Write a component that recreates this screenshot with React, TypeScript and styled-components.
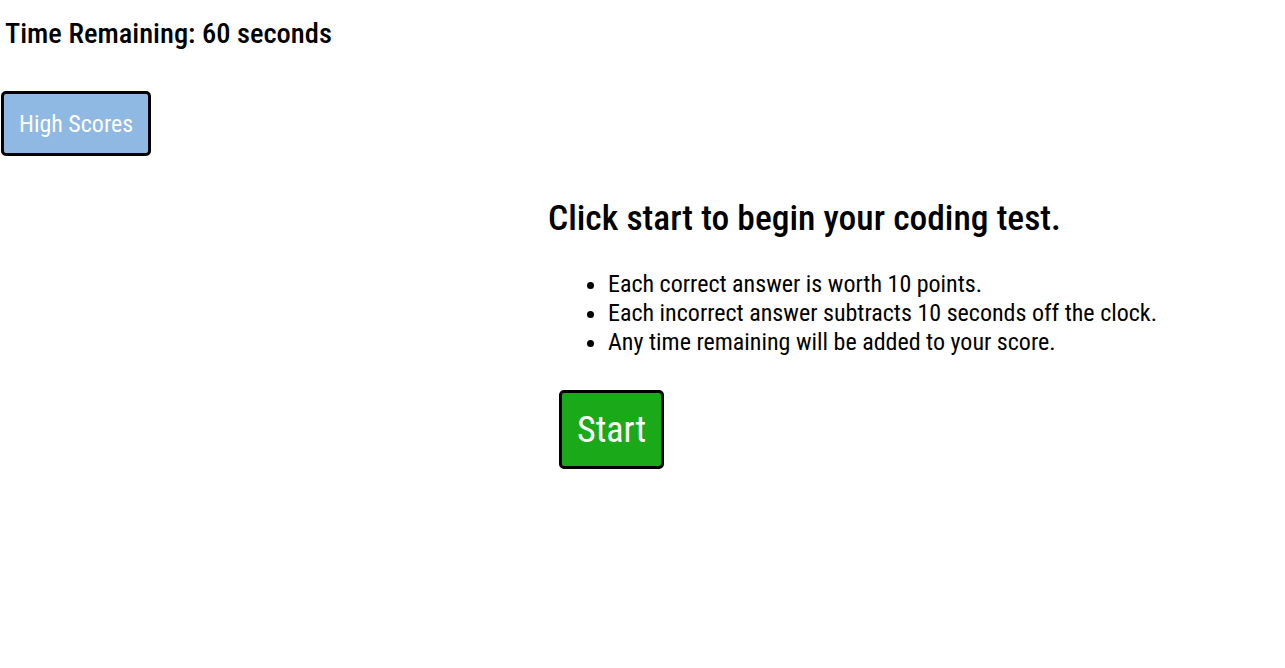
import styled, { createGlobalStyle } from 'styled-components';

const GlobalStyle = createGlobalStyle`
  body {
    margin: 0;
    background: #ffffff;
    font-family: 'Roboto Condensed', Roboto, 'Liberation Sans', sans-serif;
    font-stretch: condensed;
    color: #000000;
  }
`;

const Header = styled.header`
  display: flex;
  flex-direction: column;
  align-items: flex-start;
  padding: 15px 0 0 1px;
`;

const Timer = styled.h2`
  margin: 0 0 38px 4px;
  font-size: 28.5px;
  font-weight: 500;
  line-height: 38px;
`;

const Button = styled.button<{ $bg: string; $size: number; $pad: string }>`
  font-family: inherit;
  font-stretch: condensed;
  font-size: ${({ $size }) => $size}px;
  line-height: 1.17;
  color: #ffffff;
  background: ${({ $bg }) => $bg};
  border: 3px solid #000000;
  border-radius: 5px;
  padding: ${({ $pad }) => $pad};
  cursor: pointer;
`;

const Main = styled.main`
  display: flex;
  flex-direction: column;
  align-items: flex-start;
  padding: 41px 0 0 548px;
`;

const Title = styled.h1`
  margin: 0;
  font-size: 35.5px;
  font-weight: 500;
  line-height: 42px;
`;

const Rules = styled.ul`
  margin: 31px 0 33px;
  padding-left: 60px;
  font-size: 24px;
  line-height: 29px;
`;

const StartWrap = styled.div`
  padding-left: 11px;
`;

export default function App() {
  return (
    <>
      <GlobalStyle />
      <Header>
        <Timer>Time Remaining: 60 seconds</Timer>
        <Button $bg="#8fb8e3" $size={24} $pad="16px 15px 15px">
          High Scores
        </Button>
      </Header>
      <Main>
        <Title>Click start to begin your coding test.</Title>
        <Rules>
          <li>Each correct answer is worth 10 points.</li>
          <li>Each incorrect answer subtracts 10 seconds off the clock.</li>
          <li>Any time remaining will be added to your score.</li>
        </Rules>
        <StartWrap>
          <Button $bg="#19a919" $size={36} $pad="16px 15px 15px">
            Start
          </Button>
        </StartWrap>
      </Main>
    </>
  );
}
